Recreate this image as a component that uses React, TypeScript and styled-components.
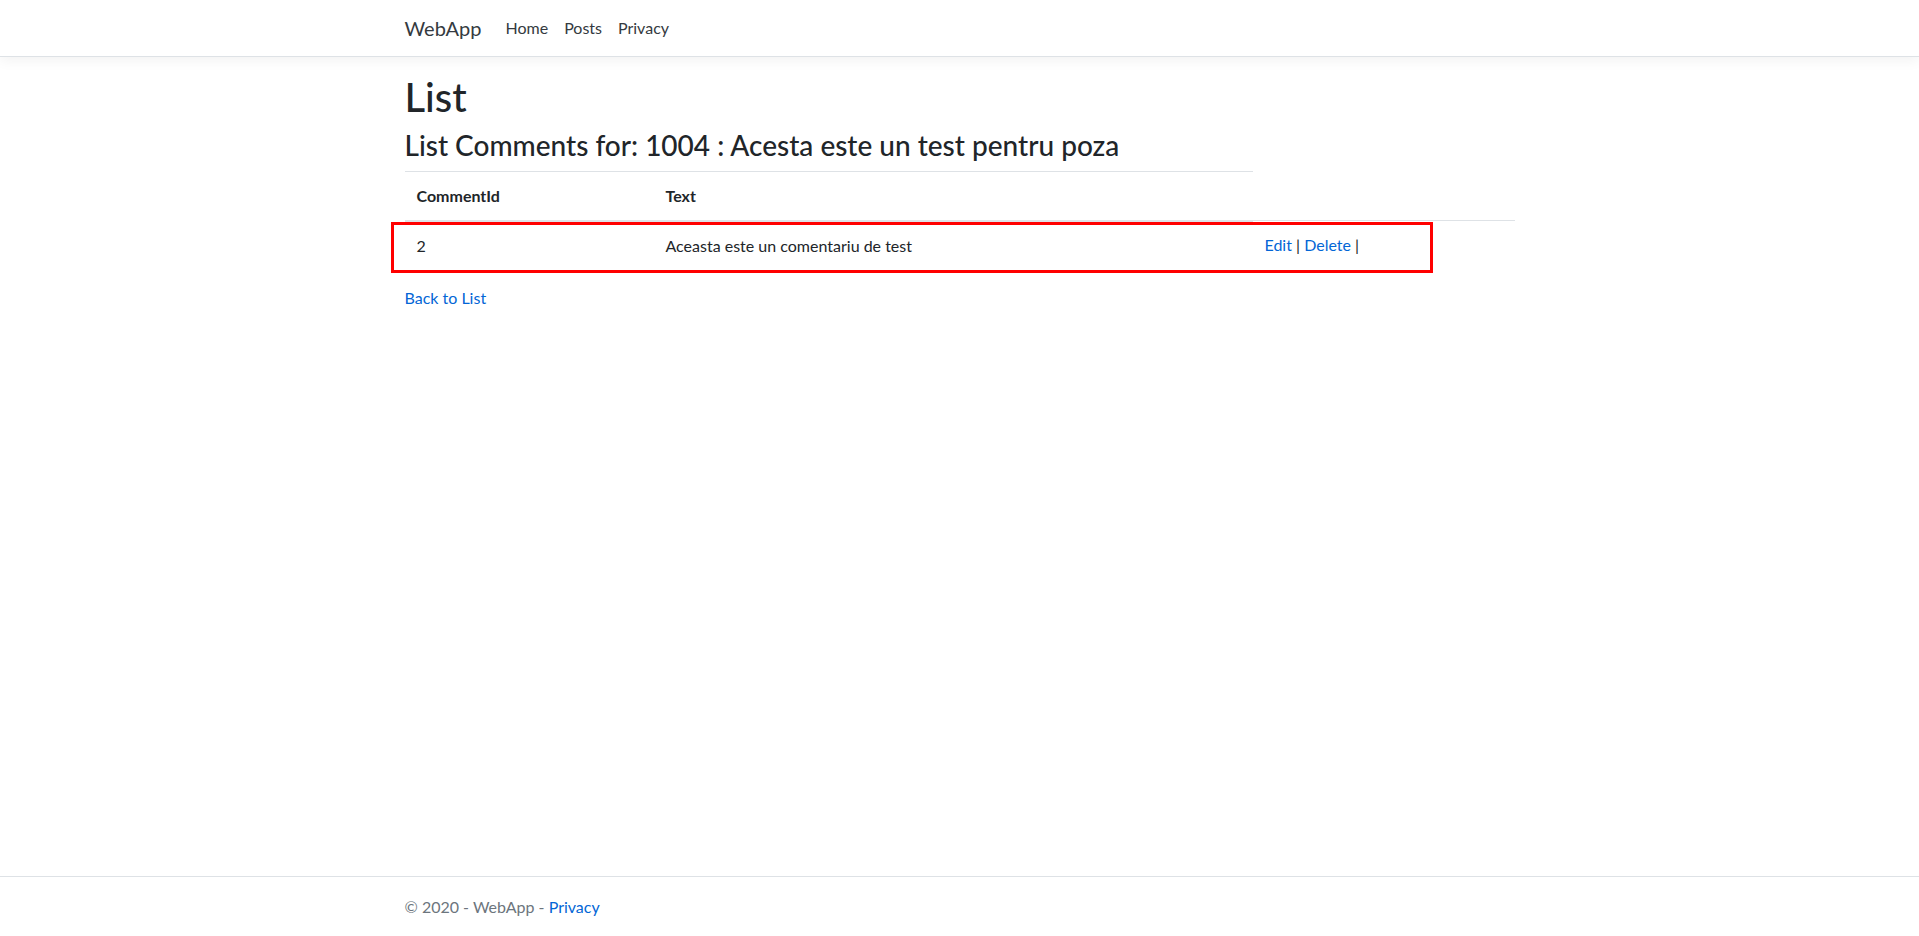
import React from "react";
import styled, { createGlobalStyle } from "styled-components";

const GlobalStyle = createGlobalStyle`
  *, *::before, *::after { box-sizing: border-box; }
  html, body { margin: 0; padding: 0; }
  body {
    font-family: "Segoe UI", Lato, "Noto Sans", sans-serif;
    font-size: 16px;
    line-height: 1.5;
    color: #212529;
    background: #fff;
  }
`;

const Page = styled.div`
  min-height: 100vh;
  display: flex;
  flex-direction: column;
`;

const Container = styled.div`
  width: 100%;
  max-width: 1140px;
  margin: 0 auto;
  padding: 0 15px;
`;

const NavBar = styled.header`
  background: #fff;
  border-bottom: 1px solid #dee2e6;
  box-shadow: 0 4px 12px rgba(0, 0, 0, 0.05);
  padding: 8px 0;
  margin-bottom: 16px;
`;

const NavInner = styled(Container)`
  display: flex;
  align-items: center;
`;

const Brand = styled.a`
  font-size: 20px;
  line-height: 30px;
  padding: 5px 0;
  margin-right: 16px;
  color: #343a40;
  text-decoration: none;
  white-space: nowrap;
`;

const NavList = styled.nav`
  display: flex;
`;

const NavLink = styled.a`
  padding: 8px;
  color: #343a40;
  text-decoration: none;
  line-height: 24px;
`;

const Main = styled.main`
  flex: 1;
`;

const Title = styled.h1`
  font-size: 40px;
  font-weight: 500;
  line-height: 1.2;
  margin: 0 0 8px;
`;

const SubTitle = styled.h3`
  font-size: 28px;
  font-weight: 500;
  line-height: 1.2;
  margin: 0 0 8px;
`;

const TableWrap = styled.div`
  position: relative;
  margin-bottom: 16px;
`;

const Table = styled.table`
  width: 100%;
  border-collapse: collapse;
  color: #212529;
`;

const HeadCell = styled.th<{ $w?: number }>`
  text-align: left;
  font-weight: 700;
  vertical-align: bottom;
  padding: 12px;
  border-top: 1px solid #dee2e6;
  border-bottom: 2px solid #dee2e6;
  width: ${(p) => (p.$w ? `${p.$w}px` : "auto")};
`;

const Cell = styled.td`
  padding: 12px;
  vertical-align: top;
  border-top: 1px solid #dee2e6;
`;

const Link = styled.a`
  color: #0366d6;
  text-decoration: none;
`;

const Highlight = styled.div`
  position: absolute;
  left: -14px;
  top: 51px;
  width: 1042px;
  height: 51px;
  border: 3px solid #ff0000;
  pointer-events: none;
`;

const Footer = styled.footer`
  border-top: 1px solid #dee2e6;
  color: #6c757d;
  line-height: 58px;
  padding-top: 1px;
  white-space: nowrap;
`;

export default function App() {
  return (
    <Page>
      <GlobalStyle />
      <NavBar>
        <NavInner>
          <Brand href="#">WebApp</Brand>
          <NavList>
            <NavLink href="#">Home</NavLink>
            <NavLink href="#">Posts</NavLink>
            <NavLink href="#">Privacy</NavLink>
          </NavList>
        </NavInner>
      </NavBar>
      <Main>
        <Container>
          <Title>List</Title>
          <SubTitle>List Comments for: 1004 : Acesta este un test pentru poza</SubTitle>
          <TableWrap>
            <Table>
              <thead>
                <tr>
                  <HeadCell $w={249}>CommentId</HeadCell>
                  <HeadCell $w={599}>Text</HeadCell>
                </tr>
              </thead>
              <tbody>
                <tr>
                  <Cell>2</Cell>
                  <Cell>Aceasta este un comentariu de test</Cell>
                  <Cell>
                    <Link href="#">Edit</Link> | <Link href="#">Delete</Link> |
                  </Cell>
                </tr>
              </tbody>
            </Table>
            <Highlight />
          </TableWrap>
          <div>
            <Link href="#">Back to List</Link>
          </div>
        </Container>
      </Main>
      <Footer>
        <Container>
          © 2020 - WebApp - <Link href="#">Privacy</Link>
        </Container>
      </Footer>
    </Page>
  );
}
